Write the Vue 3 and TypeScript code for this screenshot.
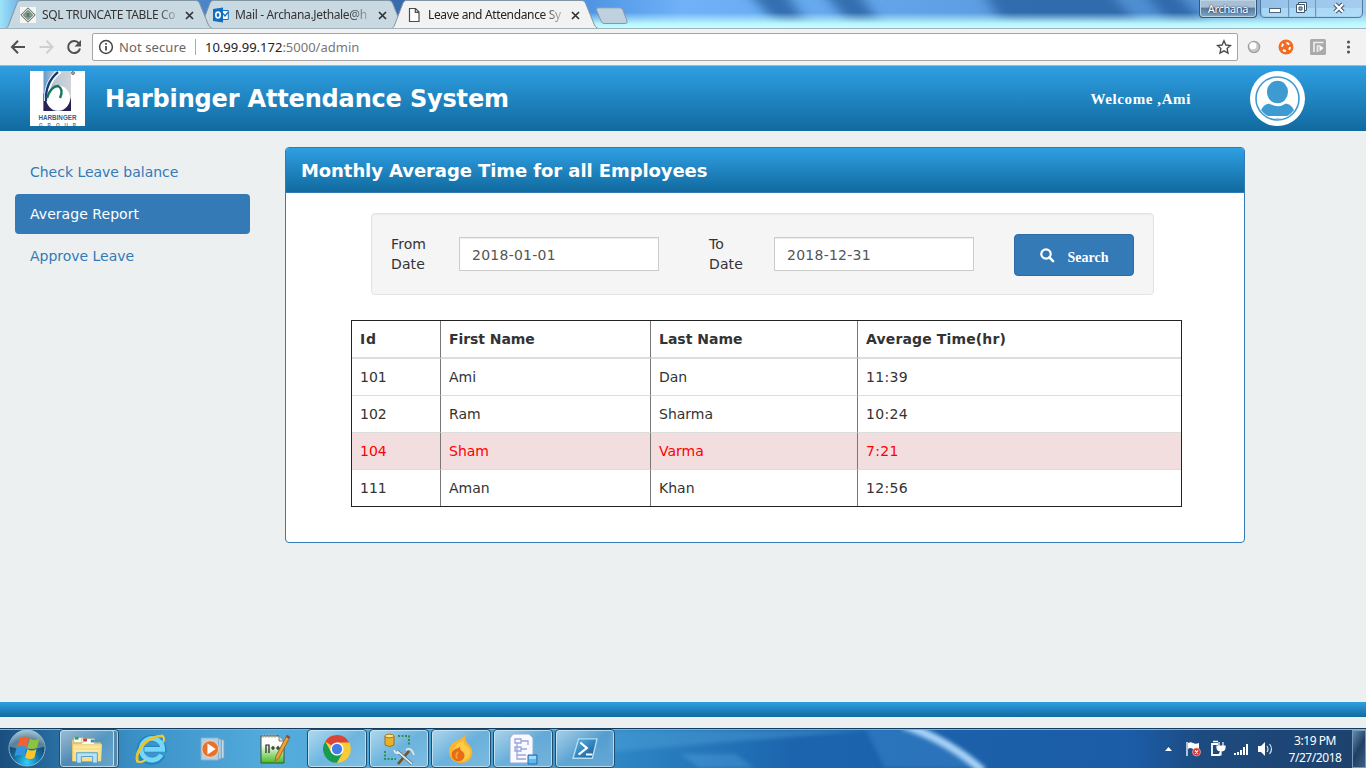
<script setup lang="ts">
import { ref } from 'vue'

interface Tab { id: string; title: string; active: boolean }
interface Employee { id: number; first: string; last: string; time: string; low: boolean }

const tabs: Tab[] = [
  { id: 'sql', title: 'SQL TRUNCATE TABLE Co', active: false },
  { id: 'mail', title: 'Mail - Archana.Jethale@h', active: false },
  { id: 'page', title: 'Leave and Attendance Sy', active: true },
]
const menu: string[] = ['Check Leave balance', 'Average Report', 'Approve Leave']
const selected = ref('Average Report')
const fromDate = ref('2018-01-01')
const toDate = ref('2018-12-31')
const employees: Employee[] = [
  { id: 101, first: 'Ami', last: 'Dan', time: '11:39', low: false },
  { id: 102, first: 'Ram', last: 'Sharma', time: '10:24', low: false },
  { id: 104, first: 'Sham', last: 'Varma', time: '7:21', low: true },
  { id: 111, first: 'Aman', last: 'Khan', time: '12:56', low: false },
]
</script>

<template>
  <div class="screen">
    <header class="tabstrip">
      <svg class="sky" viewBox="0 0 1366 28" preserveAspectRatio="none">
        <defs>
          <linearGradient id="skyG" x1="0" x2="1" y1="0" y2="0">
            <stop offset="0" stop-color="#9de4f8" /><stop offset=".02" stop-color="#5f9ee0" /><stop offset=".3" stop-color="#3768ab" />
            <stop offset=".42" stop-color="#4a90e0" /><stop offset=".5" stop-color="#6fb2f8" /><stop offset=".7" stop-color="#5f9fe3" />
            <stop offset=".86" stop-color="#4d8bce" /><stop offset="1" stop-color="#9cc9ee" />
          </linearGradient>
          <linearGradient id="glow" x1="0" x2="0" y1="0" y2="1">
            <stop offset=".45" stop-color="#bffaff" stop-opacity="0" /><stop offset=".85" stop-color="#bffaff" stop-opacity=".95" /><stop offset="1" stop-color="#c4ffff" />
          </linearGradient>
          <filter id="soft" x="-20%" y="-60%" width="140%" height="220%"><feGaussianBlur stdDeviation="7 2" /></filter>
        </defs>
        <rect width="1366" height="28" fill="url(#skyG)" />
        <g fill="#2a65a6" filter="url(#soft)" opacity=".85">
          <path d="M750-5h38l18 28h-30zM826-5h34l20 28h-32zM985-5h127l24 26H1000zM1146-5h30l30 28h-36z" />
        </g>
        <rect x="590" width="776" height="28" fill="url(#glow)" />
      </svg>
      <div class="tabs">
        <div v-for="t in tabs" :key="t.id" class="tab" :class="{ active: t.active }">
          <svg class="shape" width="207" height="28" viewBox="0 0 207 28">
            <path d="M0 28.500Q2 27 3 24L11 3Q12 .5 14 .5H190Q192.500 .5 193.500 3L202 24Q203 27 206 28.500Z" :fill="t.active ? '#f2f2f2' : '#c9d9e1'" stroke="#8295a3" />
          </svg>
          <svg v-if="t.id === 'sql'" class="fav" viewBox="0 0 16 16">
            <rect width="16" height="16" fill="#f4f6f4" /><path d="M8 .8 15.200 8 8 15.200.8 8Z" fill="#d5dfd8" stroke="#5b6a63" />
            <path d="M8 3.500 12.500 8 8 12.500 3.500 8Z" fill="#a9bdb0" stroke="#53665b" /><path d="M5.500 7h5M5.500 9h5M8 5.500v5" stroke="#3b6650" />
          </svg>
          <svg v-else-if="t.id === 'mail'" class="fav" viewBox="0 0 16 16">
            <path d="M9 3.500h6.300v9H9z" fill="#fff" stroke="#1273c5" /><path d="m10 6.500 2 2.500 3.300-4" fill="none" stroke="#1273c5" stroke-width="1.300" />
            <path d="M0 2 10 .5v15L0 14Z" fill="#0f70c2" /><ellipse cx="5" cy="8" rx="2.200" ry="2.900" fill="none" stroke="#fff" stroke-width="1.600" />
          </svg>
          <svg v-else class="fav" viewBox="0 0 16 16"><path d="M3.500 1.500h6L13 5v9.500H3.500ZM9.300 1.500V5.300H13" fill="#fff" stroke="#4c4c4c" stroke-width="1.200" /></svg>
          <span class="tab-title">{{ t.title }}</span>
          <svg class="close" viewBox="0 0 9 9"><path d="m1 1 7 7M8 1 1 8" stroke="#333" stroke-width="1.700" /></svg>
        </div>
        <svg class="newtab" width="33" height="18" viewBox="0 0 33 18"><path d="M1.500 3Q1 .8 3.500.8H25Q27 .8 28 3l4 11q.8 2.500-1.500 2.500H9q-2 0-3-2.500Z" fill="#bfd0df" stroke="#8299ae" /></svg>
      </div>
      <div class="window-buttons">
        <span class="user">Archana</span>
        <svg width="104" height="18" viewBox="0 0 104 18">
          <path d="M.5-1V13q0 4.500 4.500 4.500H98q4.500 0 4.500-4.500V-1" fill="#a9d0f0" fill-opacity=".65" stroke="#56799d" />
          <path d="M28.500 0v17M55.500 0v17" stroke="#6f97ba" /><path d="M2 8h26v8H6q-4 0-4-4zM30 8h25v8H30zM57 8h44v4q0 4-4 4H57z" fill="#b9eaff" opacity=".5" />
          <rect x="9.500" y="8.500" width="11" height="4" fill="#fff" stroke="#51647a" />
          <path d="M38.500 2.500h8v8h-8z" fill="#fff" stroke="#43576b" /><path d="M36.500 4.500h8v8h-8z" fill="#fff" stroke="#43576b" /><path d="M39 7h3v3h-3z" fill="#8eb8d8" stroke="#43576b" />
          <path d="m75 4 8 8M83 4l-8 8" stroke="#43576b" stroke-width="4.500" /><path d="m75 4 8 8M83 4l-8 8" stroke="#fff" stroke-width="2.300" />
        </svg>
      </div>
    </header>

    <div class="toolbar">
      <svg class="nav-icons" width="92" height="37" viewBox="0 0 92 37" fill="none">
        <path d="M25 18H12.500M18 11.800 12 18l6 6.200" stroke="#505050" stroke-width="2" />
        <path d="M39.500 18H52M46.500 11.800 52.500 18l-6 6.200" stroke="#cfcfcf" stroke-width="2" />
        <path d="M79 14.500A6 6 0 1 0 80 19.500" stroke="#505050" stroke-width="2" /><path d="M81 11v6.500h-6.500z" fill="#505050" />
      </svg>
      <div class="address">
        <svg width="16" height="16" viewBox="0 0 16 16" fill="none"><circle cx="8" cy="8" r="6.400" stroke="#444" stroke-width="1.500" /><path d="M8 7v4.500M8 4v1.800" stroke="#444" stroke-width="1.700" /></svg>
        <span class="insecure">Not secure</span><i class="sep"></i>
        <span class="url">10.99.99.172<em>:5000/admin</em></span>
        <svg class="star" width="16" height="16" viewBox="0 0 16 16"><path d="m8 1.800 1.900 4.200 4.600.5-3.400 3.100.9 4.600-4-2.300-4 2.300.9-4.600L1.500 6.500 6.100 6Z" fill="none" stroke="#4d4d4d" stroke-width="1.400" /></svg>
      </div>
      <svg width="128" height="37" viewBox="0 0 128 37">
        <circle cx="16" cy="18" r="5.600" fill="#c9c9c9" stroke="#9e9e9e" stroke-width="1.300" /><circle cx="14.900" cy="16.700" r="3.500" fill="#fff" />
        <circle cx="48" cy="18" r="7.500" fill="#f26b21" /><circle cx="48" cy="18" r="4" fill="none" stroke="#fff" stroke-width="2" stroke-dasharray="3 3.280" /><circle cx="48" cy="18" r="1.600" fill="#f26b21" />
        <rect x="72" y="10" width="16" height="16" rx="1.500" fill="#aaa" /><path d="M76 23V13.500H85.500M79.500 23v-6h2" fill="none" stroke="#eee" stroke-width="1.700" /><path d="m81.500 16 4 3-4 3.500z" fill="#fff" />
        <g fill="#555"><circle cx="110.500" cy="13" r="1.600" /><circle cx="110.500" cy="18" r="1.600" /><circle cx="110.500" cy="23" r="1.600" /></g>
      </svg>
    </div>

    <div class="app-header">
      <svg class="logo" width="55" height="55" viewBox="0 0 55 55">
        <defs><linearGradient id="lg" x1="0" x2="1"><stop offset="0" stop-color="#5f9bcc" /><stop offset=".4" stop-color="#b7c8d4" /><stop offset="1" stop-color="#d3d3d8" /></linearGradient></defs>
        <rect width="55" height="55" fill="#fff" /><rect x="13.500" width="27.500" height="40" fill="url(#lg)" />
        <path d="M13.500 22V40H41V26Q38 40 28 40Q17 40 17 26z" fill="#292253" />
        <ellipse cx="28" cy="27" rx="12" ry="12.500" fill="#fff" />
        <path d="M30 0Q16 10 16.500 30" fill="none" stroke="#fff" stroke-width="5" />
        <path d="M28 1Q15 12 16 30" fill="none" stroke="#1e3b75" stroke-width="2.300" /><path d="M17 27Q21 15 28 15q6 3 2 12" fill="none" stroke="#16765d" stroke-width="2.400" />
        <circle cx="43" cy="2" r="1.500" fill="#aaa" stroke="#555" stroke-width=".7" />
        <text x="8.500" y="48.500" font-size="6.500" font-weight="bold" textLength="38" lengthAdjust="spacingAndGlyphs" fill="#3c5b86">HARBINGER</text>
        <text x="9" y="55.500" font-size="4.700" font-weight="bold" textLength="37" fill="#786e60">GROUP</text>
      </svg>
      <h1>Harbinger Attendance System</h1>
      <span class="welcome">Welcome ,Ami</span>
      <svg class="avatar" width="55" height="55" viewBox="0 0 55 55">
        <defs><clipPath id="face"><circle cx="27.500" cy="27.500" r="20" /></clipPath></defs>
        <circle cx="27.500" cy="27.500" r="27.500" fill="#fff" /><circle cx="27.500" cy="27.500" r="21.500" fill="#fff" stroke="#3d9bd1" stroke-width="1.600" />
        <g clip-path="url(#face)"><path d="M9 45Q11 34 19 32.500Q27.500 38 36 32.500Q44 34 46 45Z" fill="#3d9bd1" /><path d="M17 47h21v2q-10 3-21 0z" fill="#3d9bd1" /></g>
        <ellipse cx="27.500" cy="21" rx="10.500" ry="11.200" fill="#3d9bd1" />
      </svg>
    </div>

    <main class="content">
      <nav class="side">
        <a v-for="m in menu" :key="m" :class="{ current: m === selected }" @click="selected = m">{{ m }}</a>
      </nav>
      <section class="panel">
        <h2>Monthly Average Time for all Employees</h2>
        <div class="panel-body">
          <form class="well" @submit.prevent>
            <label>From Date</label><input v-model="fromDate" class="from" />
            <label class="to-label">To Date</label><input v-model="toDate" />
            <button>
              <svg width="15" height="15" viewBox="0 0 15 15"><circle cx="6" cy="6" r="4.700" fill="none" stroke="#fff" stroke-width="2.200" /><path d="m9.300 9.300 3.800 3.800" stroke="#fff" stroke-width="2.600" stroke-linecap="round" /></svg>
              <span>Search</span>
            </button>
          </form>
          <table>
            <thead><tr><th class="c-id">Id</th><th class="c-first">First Name</th><th class="c-last">Last Name</th><th class="c-time">Average Time(hr)</th></tr></thead>
            <tbody>
              <tr v-for="e in employees" :key="e.id" :class="{ low: e.low }"><td>{{ e.id }}</td><td>{{ e.first }}</td><td>{{ e.last }}</td><td class="time">{{ e.time }}</td></tr>
            </tbody>
          </table>
        </div>
      </section>
    </main>
    <div class="app-footer"></div>
    <div class="page-end"></div>

    <footer class="taskbar">
      <svg class="aero" viewBox="0 0 1366 40" preserveAspectRatio="none">
        <defs>
          <linearGradient id="bar" x1="0" x2="1"><stop offset="0" stop-color="#1a4e7f" /><stop offset=".04" stop-color="#286da0" /><stop offset=".1" stop-color="#3b91c7" /><stop offset=".2" stop-color="#54acdd" /><stop offset=".38" stop-color="#4b9fd2" /><stop offset=".46" stop-color="#2c84c3" /><stop offset=".58" stop-color="#1c65ae" /><stop offset=".83" stop-color="#1b5ca6" /><stop offset=".88" stop-color="#1d4b80" /><stop offset="1" stop-color="#1d416c" /></linearGradient>
          <filter id="b2" x="-20%" y="-20%" width="140%" height="140%"><feGaussianBlur stdDeviation="2" /></filter>
        </defs>
        <rect width="1366" height="40" fill="url(#bar)" />
        <path d="M610 24 870 2H610zM680 26h55l20 14h-55z" fill="#5aacdf" opacity=".35" filter="url(#b2)" /><path d="M865 0h55q38 18 60 40H885z" fill="#4290d4" opacity=".4" filter="url(#b2)" />
        <path d="M903-3Q948 12 983 43" fill="none" stroke="#a8d3f7" stroke-width="8" filter="url(#b2)" />
        <path d="M0 .5H1366" stroke="#123d63" /><path d="M0 1.500H1366" stroke="#83b1d0" />
      </svg>
      <div class="start">
        <svg width="40" height="38" viewBox="0 0 40 38">
          <defs><radialGradient id="orb" cx=".5" cy=".9" r=".9"><stop offset="0" stop-color="#32d2fa" /><stop offset=".38" stop-color="#1474a8" /><stop offset=".7" stop-color="#184668" /><stop offset="1" stop-color="#91b6cb" /></radialGradient></defs>
          <circle cx="19" cy="19" r="18" fill="url(#orb)" stroke="#8ab6cd" /><path d="M2 18A17 17 0 0 1 36 18Q20 22 2 18" fill="#d4eaf4" opacity=".35" />
          <path d="M12 9q4-3 9 0l-2 9q-5-3-10 0z" fill="#ee6330" /><path d="M22 9.500q4 3 9.500 0l-2.500 9q-5 3-9.500 0z" fill="#8bc53f" /><path d="M8.500 19q5-3 10 0l-2 8.500q-5-3-10 0z" fill="#3295df" /><path d="M19.500 20q4 3 9 0l-2 8.500q-4 3-9.500 0z" fill="#fcc52b" />
        </svg>
      </div>
      <div class="apps">
        <div class="app open stacked">
          <svg width="34" height="30" viewBox="0 0 36 32"><path d="M2 6h13l2 3h16v20H2z" fill="#e4c267" /><path d="M4 4h10v5H4zM12 5h14v6H12z" fill="#fff" stroke="#c8af69" stroke-width=".6" /><path d="M5 3h4v3H5z" fill="#2ba85b" /><path d="M14 5h4v3h-4z" fill="#cf3b2f" /><path d="M22 6h4v3h-4z" fill="#2c91d5" /><path d="M3 11h31l-1 18H3z" fill="#f9df8c" /><path d="M4 14h28M4 18h28" stroke="#fff2bb" /><path d="M7 31V20h22v11h-5v-7H12v7z" fill="#b9e2f5" stroke="#4b9fd1" /></svg>
        </div>
        <div class="app">
          <svg width="32" height="32" viewBox="0 0 34 34"><path d="M29 23A12.500 12.500 0 1 1 30 17H9" fill="none" stroke="#2387c2" stroke-width="7" /><path d="M28 23A11.500 11.500 0 1 1 29.500 17.500H10" fill="none" stroke="#75d8fa" stroke-width="5" /><path d="M3 31C-1 21 11 3 30 3" fill="none" stroke="#eac52a" stroke-width="3" /><path d="M29 3q3 2 1 7M2 29q1 4 9 0" fill="none" stroke="#f4d236" stroke-width="2" /></svg>
        </div>
        <div class="app">
          <svg width="28" height="24" viewBox="0 0 28 26"><path d="M21 3h5v20h-5z" fill="#c0dcec" stroke="#6b9ebf" /><path d="M18 2h5v22h-5z" fill="#aed1e5" stroke="#6b9ebf" /><path d="M1 1h19v24H1z" fill="#aed1e7" stroke="#83abc7" /><circle cx="11" cy="13" r="9" fill="#e8712b" stroke="#f5d2af" /><path d="m8 7 9 6-9 6z" fill="#fff" /></svg>
        </div>
        <div class="app">
          <svg width="32" height="34" viewBox="0 0 32 34"><defs><linearGradient id="npp" x1="0" x2="0" y1="0" y2="1"><stop offset=".3" stop-color="#fff" /><stop offset="1" stop-color="#45bd1d" /></linearGradient></defs><path d="M2 4h18l5 5v22H2z" fill="url(#npp)" stroke="#405338" /><path d="M20 4v5h5" fill="#ddd" stroke="#777" /><path d="M4 2v4M7 2v4M10 2v4M13 2v4M16 2v4" stroke="#aaa" /><path d="m28 3 3 2-11 21-4 3 1-5z" fill="#e9a33a" stroke="#9d6a26" /><path d="m28 3 3 2-1 2-3-2z" fill="#804f49" /><path d="M7 21v-8h3v8M12 16h4M14 14v4M17 16h4M19 14v4" fill="none" stroke="#222" stroke-width="1.200" /></svg>
        </div>
        <div class="app open">
          <svg width="30" height="30" viewBox="0 0 32 32"><circle cx="16" cy="16" r="14.700" fill="#fbcb35" /><path d="M16 16 3.500 8A14.700 14.700 0 0 1 29 9H16z" fill="#d94538" /><path d="M3.500 8A14.700 14.700 0 0 0 16 30.700L22 20 16 23 10 20z" fill="#169b54" /><circle cx="16" cy="16" r="7" fill="#fff" /><circle cx="16" cy="16" r="5.500" fill="#417de9" /></svg>
        </div>
        <div class="app open">
          <svg width="34" height="34" viewBox="0 0 34 34"><path d="M3 4v9q5 3 9 0V4" fill="#eab02b" stroke="#9c7019" /><ellipse cx="7.500" cy="4" rx="4.500" ry="1.800" fill="#ffe08d" stroke="#a97a1b" /><path d="M16 4h11v10M3 19v8h11" fill="none" stroke="#198225" stroke-width="1.500" stroke-dasharray="2 1.500" /><path d="m16 32 11-13" stroke="#76511f" stroke-width="2.600" /><path d="m15 19 15 13" stroke="#596872" stroke-width="3" /><path d="m15 19 15 13M12 18q1 4 5 3M24 18q5-4 8 5" fill="none" stroke="#e0e8eb" stroke-width="1.700" /></svg>
        </div>
        <div class="app open">
          <svg width="28" height="32" viewBox="0 0 30 34"><path d="M21 1Q17 7 23 12q5 5 4 11-2 9-13 9Q3 31 2 20q0-8 9-12Q18 5 21 1z" fill="#fbb52c" /><path d="M18 8Q7 12 6 20q0 8 7 10 11 0 12-9 0-5-5-8-3-2-2-5" fill="#fccc48" /><path d="M14 13q-1 5 3 7 3 3 1 7-2 4-8 3-5-2-5-7t7-7q2-1 2-3" fill="#e66c16" /><path d="M12 20q-4 4-1 7" fill="none" stroke="#f6a13b" stroke-width="2" /></svg>
        </div>
        <div class="app open">
          <svg width="30" height="34" viewBox="0 0 30 34"><path d="M5 2h16l4 4v25H2V6z" fill="#f8faff" stroke="#9caad0" /><path d="M7 7h6v4H7zM13 9h7v4M7 15h6v4H7zM13 17h6M9 11v16h9M9 23h9" fill="none" stroke="#9aa5da" stroke-width="1.300" /><path d="M20 23h9v9h-9z" fill="#61b6f1" stroke="#216bad" /><path d="M21 24h7v3h-7z" fill="#a1dafa" /></svg>
        </div>
        <div class="app open">
          <svg width="28" height="24" viewBox="0 0 30 26"><defs><linearGradient id="ps" x1="0" x2="1" y2="1"><stop offset="0" stop-color="#59b8e5" /><stop offset="1" stop-color="#125396" /></linearGradient></defs><path d="M8 2h20l-5 21H2z" fill="url(#ps)" stroke="#b4ddf1" stroke-width="1.500" /><path d="m10 6 7 6-9 7M16 19h7" fill="none" stroke="#fff" stroke-width="2.300" /></svg>
        </div>
      </div>
      <svg class="tray" width="120" height="40" viewBox="0 0 120 40">
        <path d="m7 23 3.500-4 3.500 4z" fill="#fff" />
        <path d="M29 14v14" stroke="#fff" stroke-width="1.300" /><path d="M30 15q2.500-1.500 5 0t6 0v6q-3 2-6 0t-5 0z" fill="#fff" /><circle cx="38.500" cy="24" r="4" fill="#d33838" stroke="#f1a2a2" stroke-width=".8" /><path d="m37 22.500 3 3m0-3-3 3" stroke="#fff" stroke-width="1.200" />
        <path d="M60 16h-6v11h8" fill="none" stroke="#fff" stroke-width="1.800" /><path d="M55 13.500h5" stroke="#fff" stroke-width="1.500" /><path d="M61 14v3.500M65 14v3.500M59 18h8v1.500q0 3.500-4 3.500t-4-3.500zM63 22v5h-3" fill="#fff" stroke="#fff" stroke-width="1.200" />
        <path d="M76 25h2v2h-2zM79 24h2v3h-2zM82 22h2v5h-2zM85 19h2v8h-2zM88 16h2v11h-2z" fill="#fff" />
        <path d="M100 18h3l4-4v14l-4-4h-3z" fill="#fff" /><path d="M109 18q2 3 0 6M111.500 16q4 5 0 10" fill="none" stroke="#d3e3ef" stroke-width="1.200" />
      </svg>
      <div class="clock"><span class="hour">3:19 PM</span><span class="date">7/27/2018</span></div>
      <div class="show-desktop"></div>
    </footer>
  </div>
</template>

<style>
html, body { overflow: hidden; }
</style>

<style scoped>
* { box-sizing: border-box; }
.screen { display: flex; flex-direction: column; width: 1366px; height: 768px; overflow: hidden; background: #ecf0f1; font: 14px/20px Verdana, "DejaVu Sans", sans-serif; color: #333; }
svg { display: block; flex: none; }
.tabstrip { position: relative; display: flex; justify-content: space-between; height: 28px; flex: none; }
.sky, .aero { position: absolute; inset: 0; width: 100%; height: 100%; }
.tabs { display: flex; position: relative; padding-left: 6px; }
.tab { position: relative; display: flex; align-items: center; width: 206px; height: 28px; padding: 2px 0 0 14px; margin-right: -13px; font: 12px/16px "Noto Sans", sans-serif; color: #333; }
.tab:nth-child(1) { z-index: 2; }
.tab.active { z-index: 3; color: #222; }
.shape { position: absolute; left: 0; top: 0; }
.fav { position: relative; width: 16px; height: 16px; margin-right: 6px; }
.tab-title { position: relative; width: 143px; flex: none; white-space: nowrap; overflow: hidden; letter-spacing: -.35px; -webkit-mask-image: linear-gradient(90deg, #000 80%, transparent 98%); mask-image: linear-gradient(90deg, #000 80%, transparent 98%); }
.close { position: relative; width: 9px; height: 9px; }
.newtab { margin: 7px 0 0 10px; }
.window-buttons { position: relative; display: flex; padding-right: 2px; }
.user { width: 58px; height: 18px; margin-right: 3px; border: 1px solid #345879; border-top: 0; border-radius: 0 0 4px 4px; background: linear-gradient(#a9bfd3 0 40%, #587ba0 50%, #7fa8c7); box-shadow: inset 0 0 0 1px #b9d2e4; color: #fff; text-shadow: 0 0 2px #112; text-align: center; font: 11px/17px "Noto Sans", sans-serif; letter-spacing: -.3px; }
.toolbar { display: flex; flex: none; height: 38px; background: #f2f2f2; border-top: 1px solid #a0b3bd; border-bottom: 1px solid #a2b9cc; }
.address { display: flex; align-items: center; width: 1146px; height: 28px; margin-top: 4px; padding: 0 5px; background: #fff; border: 1px solid #a5a5a5; border-radius: 2px; font: 13px/18px "Noto Sans", sans-serif; color: #666; }
.insecure { width: 70px; margin-left: 5px; white-space: nowrap; letter-spacing: .1px; }
.sep { width: 1px; height: 16px; background: #aaa; margin: 0 9px 0 6px; }
.url { color: #222; }
.url em { font-style: normal; color: #777; }
.star { margin-left: auto; }
.app-header { display: flex; align-items: center; flex: none; height: 65px; padding: 0 61px 0 30px; background: linear-gradient(#2f9fe2, #116a9f); color: #fff; }
.logo { font-family: "Liberation Sans", sans-serif; }
h1 { margin: 0 auto 0 20px; font-size: 24px; line-height: 30px; letter-spacing: -.17px; }
.welcome { margin-right: 59px; font: bold 15px/20px "Liberation Serif", serif; letter-spacing: .6px; }
.content { display: flex; flex: none; height: 571px; padding-left: 15px; align-items: flex-start; }
.side { display: flex; flex-direction: column; gap: 2px; width: 235px; margin: 21px 35px 0 0; }
.side a { height: 40px; padding: 10px 15px; border-radius: 4px; color: #337ab7; letter-spacing: -.02px; }
.side a.current { background: #337ab7; color: #fff; letter-spacing: .05px; }
.panel { width: 960px; height: 396px; margin-top: 16px; border: 1px solid #337ab7; border-radius: 4px; background: #fff; overflow: hidden; }
h2 { height: 45px; margin: 0; padding: 13px 15px 11px; border-bottom: 1px solid #337ab7; background: linear-gradient(#2f9fe2, #116a9f); color: #fff; font-size: 18px; line-height: 20px; letter-spacing: -.08px; }
.panel-body { padding: 20px 62px 0 65px; }
.well { display: flex; align-items: center; width: 783px; height: 82px; margin: 0 0 25px 20px; padding: 0 19px; border: 1px solid #e3e3e3; border-radius: 4px; background: #f5f5f5; box-shadow: inset 0 1px 1px rgba(0,0,0,.05); }
label { width: 48px; margin-right: 20px; letter-spacing: .1px; }
.to-label { width: 45px; }
input { width: 200px; height: 34px; padding: 7px 12px 5px; border: 1px solid #ccc; border-radius: 0; background: #fff; box-shadow: inset 0 1px 1px rgba(0,0,0,.075); color: #555; font: 14px/20px Verdana, "DejaVu Sans", sans-serif; letter-spacing: .25px; }
.from { margin-right: 50px; }
button { display: flex; align-items: center; justify-content: center; gap: 13px; width: 120px; height: 42px; margin: 2px 0 0 40px; padding: 0; border: 1px solid #2e6da4; border-radius: 4px; background: #337ab7; color: #fff; font: bold 14px/20px "Liberation Serif", serif; }
button span { padding-top: 5px; }
table { width: 831px; border: 1px solid #222; border-spacing: 0; table-layout: fixed; }
th, td { height: 37px; padding: 8px; border-right: 1px solid #777; border-bottom: 1px solid #ddd; text-align: left; line-height: 20px; }
th { height: 38px; border-bottom-width: 2px; }
th:last-child, td:last-child { border-right: 0; }
tr:last-child td { height: 36px; border-bottom: 0; }
.c-id { width: 89px; letter-spacing: .8px; }
.c-first { width: 210px; letter-spacing: -.07px; }
.c-last { width: 207px; }
.c-time { letter-spacing: .14px; }
.time { letter-spacing: .35px; }
.low td { background: #f2dede; color: #f00; }
.app-footer { flex: none; height: 15px; background: linear-gradient(#2f9fe2, #116a9f); }
.page-end { flex: none; height: 11px; }
.taskbar { position: relative; display: flex; flex: none; height: 40px; color: #fff; }
.start { position: relative; width: 59px; padding: 1px 0 0 8px; }
.apps { position: relative; display: flex; gap: 2px; margin-right: auto; }
.app { display: flex; align-items: center; justify-content: center; width: 60px; height: 39px; margin-top: 1px; }
.app.open { border: 1px solid #214e6d; border-radius: 4px; background: linear-gradient(145deg, rgba(255,255,255,.55), rgba(255,255,255,.16) 50%, rgba(255,255,255,.27)); box-shadow: inset 0 0 0 1px rgba(208,235,247,.75); }
.app.stacked { padding-right: 5px; box-shadow: inset 0 0 0 1px rgba(208,235,247,.75), inset -4px 0 0 #5489aa, inset -5px 0 0 #c1deeb; }
.tray { position: relative; }
.clock { position: relative; display: flex; flex-direction: column; align-items: center; width: 74px; padding-top: 4px; font: 12px/17px "Noto Sans", sans-serif; letter-spacing: -.45px; }
.show-desktop { position: relative; width: 14px; height: 38px; margin-top: 2px; border: 1px solid #789ab7; background: linear-gradient(120deg, #628bac, #203f63 50%, #3b6185); }
</style>
